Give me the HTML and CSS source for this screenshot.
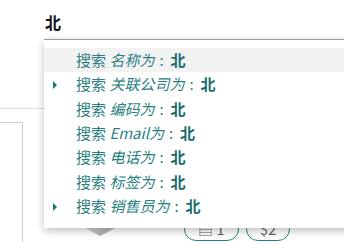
FILE: index.html
```html
<!DOCTYPE html>
<html lang="zh">
<head>
  <meta charset="UTF-8" />
  <title>搜索</title>
  <link rel="stylesheet" href="styles.css">
</head>
<body>

  <div class="search">北</div>

  <div class="page">
    <div class="sidebar">
      <div class="box"></div>
    </div>
    <div class="tools">
      <span class="shape"></span>
      <span class="pill">▤ 1</span>
      <span class="pill">$2</span>
    </div>
  </div>

  <ul class="dropdown">
    <li class="item active">搜索 <i>名称为</i><span class="sep">:</span><b>北</b></li>
    <li class="item more">搜索 <i>关联公司为</i><span class="sep">:</span><b>北</b></li>
    <li class="item">搜索 <i>编码为</i><span class="sep">:</span><b>北</b></li>
    <li class="item">搜索 <i>Email为</i><span class="sep">:</span><b>北</b></li>
    <li class="item">搜索 <i>电话为</i><span class="sep">:</span><b>北</b></li>
    <li class="item">搜索 <i>标签为</i><span class="sep">:</span><b>北</b></li>
    <li class="item more">搜索 <i>销售员为</i><span class="sep">:</span><b>北</b></li>
  </ul>

</body>
</html>
```

FILE: styles.css
```css
body {
  font-family: "Noto Sans CJK SC", "Noto Sans", sans-serif;
  margin: 0;
  background: #fff;
  color: #222;
  overflow: hidden;
  position: relative;
  height: 242px;
}

.search {
  height: 27px;
  padding: 12px 0 0 45px;
  font-size: 16px;
  font-weight: bold;
  line-height: 20px;
  color: #111;
}

.page {
  position: relative;
  height: 203px;
  overflow: hidden;
}

.sidebar {
  margin-top: 69px;
  width: 44px;
  height: 140px;
  border-top: 1px solid #ddd;
}

.box {
  margin-top: 13px;
  width: 22px;
  height: 130px;
  border-top: 1px solid #ccc;
  border-right: 1px solid #ccc;
}

.tools {
  position: absolute;
  left: 85px;
  top: 178px;
  display: flex;
  align-items: center;
  gap: 7px;
}

.shape {
  width: 30px;
  height: 8px;
  margin-top: 6px;
  margin-right: 62px;
  background: linear-gradient(160deg, #ddd, #999);
  clip-path: polygon(0 0, 100% 0, 50% 100%);
}

.pill {
  border: 1px solid #2a7f80;
  border-radius: 12px;
  padding: 0 13px;
  height: 22px;
  line-height: 22px;
  font-size: 15px;
  color: #666;
}

.dropdown {
  position: absolute;
  left: 44px;
  top: 39px;
  width: 320px;
  margin: 0;
  padding: 8px 0 10px;
  list-style: none;
  background: #fff;
  border-top: 1px solid #999;
  box-shadow: 0 3px 8px rgba(0,0,0,0.25);
}

.item {
  position: relative;
  height: 24.33px;
  line-height: 24px;
  padding-left: 32px;
  font-size: 15px;
  color: #2a7f80;
}

.item.active {
  background: #f2f2f2;
}

.item i {
  font-style: italic;
}

.item .sep {
  margin: 0 7px 0 5px;
}

.item b {
  color: #186a6e;
}

.item.more::before {
  content: "";
  position: absolute;
  left: 9px;
  top: 9px;
  border-left: 4px solid #14777a;
  border-top: 4px solid transparent;
  border-bottom: 4px solid transparent;
}
```
